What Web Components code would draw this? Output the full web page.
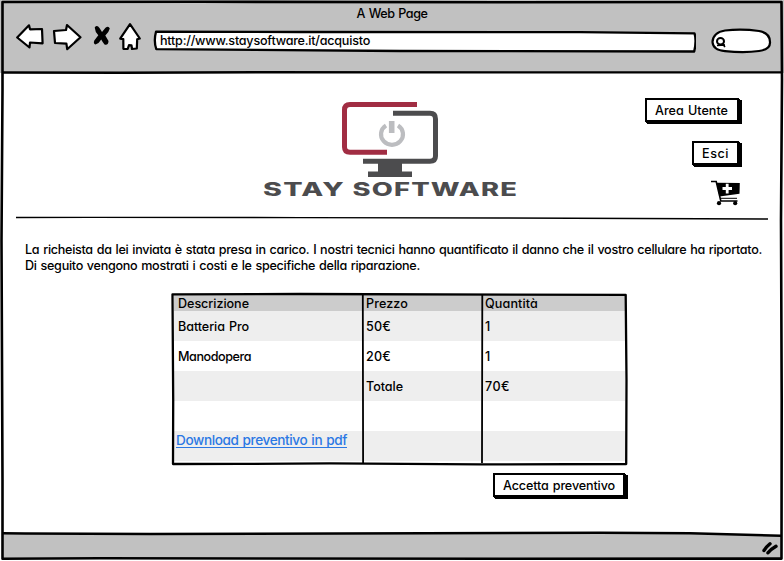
<!DOCTYPE html>
<html lang="it">
<head>
<meta charset="utf-8">
<title>A Web Page</title>
<style>
body{margin:0;background:#fff;font:450 12.6px/16px Inter,"Noto Sans",sans-serif;color:#000}
</style>
</head>
<body>
<sk-window>
  <sk-toolbar slot="top" heading="A Web Page" url="http://www.staysoftware.it/acquisto"></sk-toolbar>
  <sk-banner></sk-banner>
  <sk-intro></sk-intro>
  <sk-table></sk-table>
  <sk-actions></sk-actions>
</sk-window>
<script>
const define = (name, html, init) => customElements.define(name, class extends HTMLElement {
  connectedCallback() {
    if (this.shadowRoot) return;
    const t = document.createElement('template');
    t.innerHTML = html.replace(/\{(\w+)\}/g, (m, k) => this.getAttribute(k) ?? m);
    this.attachShadow({mode: 'open'}).append(t.content.cloneNode(true));
    if (init) init(this, this.shadowRoot);
  }
});

// A single line of lettering, tracked so that it fills its "w" in pixels.
define('sk-text', `<style>
:host{display:block;white-space:nowrap;font-feature-settings:"cv11","ss03";word-spacing:.8px}
span{display:inline-block;white-space:pre}
</style><span></span>`, (el, root) => {
  const s = root.querySelector('span'), txt = el.getAttribute('t');
  s.textContent = txt;
  el.style.width = el.getAttribute('w') + 'px';
  const natural = s.getBoundingClientRect().width;
  s.style.letterSpacing = ((el.getAttribute('w') - natural) / txt.length).toFixed(3) + 'px';
});

define('sk-window', `<style>
:host{display:grid;grid-template-rows:73px 1fr 27px;position:relative;width:784px;height:561px;box-sizing:border-box;overflow:hidden}
main{display:flex;flex-direction:column}
footer{background:#c1c1c1;margin:0 3px 2px 3px}
.frame{position:absolute;inset:0;pointer-events:none}
</style>
<slot name="top"></slot>
<main><slot></slot></main>
<footer></footer>
<svg class="frame" width="784" height="561" fill="none" stroke="#000" stroke-linejoin="round">
<path d="M700 531 V533.2 L781 535.2 V531Z" fill="#fff" stroke="none"/>
<path d="M2.5 2 L200 1.8 L500 2.2 L781.5 2 L782 80 L781 220 L781.7 400 L781.5 558.6 L500 558.8 L100 558.2 L2.5 558.8 L2.5 480 L1.5 240 L2.5 90Z" stroke-width="2.6"/>
<path d="M3 72.5 L120 72.7 L260 72.3 L781 72.4" stroke-width="2.4"/>
<path d="M3 533.3 L25 533.5 L150 534 L600 532.8 L690 533.2 L781 535.7" stroke-width="2.4"/>
<path d="M764 550.5 Q765.5 547.5 770 543.8 M768 552.8 Q770.5 549.5 776 546.3" stroke-width="3.4" stroke-linecap="round"/>
</svg>`);

define('sk-toolbar', `<style>
:host{display:grid;grid-template-rows:22px 1fr;background:#c1c1c1;padding:6px 2px 0}
.t{display:flex;justify-content:center}
nav{display:flex;align-items:flex-start;padding-left:14px}
.url{position:relative;isolation:isolate;margin-left:10px;width:544px;height:27px}
.url sk-text{padding:5px 0 0 8px}
.url svg{position:absolute;inset:0;z-index:-1}
.search{margin-left:14px}
</style>
<div class="t"><sk-text w="71" t="{heading}"></sk-text></div>
<nav>
<svg width="126" height="32" viewBox="16 20 126 32" fill="#fff" stroke="#000" stroke-width="2.2" stroke-linejoin="round" style="margin-top:-8px">
<path d="M17.2 37.5 L29 25.3 L30 29.3 L42 29 L42.6 43.3 L30 42.5 L29.5 47.5Z"/>
<path d="M54 31 L66 30 L67 25 L80.5 37.3 L67.2 49.2 L66.4 43.7 L55 43Z"/>
<path d="M94.7 27.5 Q97 24.5 99.5 28 L102 32 L105.5 27.8 Q108.5 25.5 109.8 28.5 Q109 32 105.3 35.5 L108.5 41 Q108.5 45.5 104.5 44.5 Q102.5 42 101.2 39.5 Q99 43.5 95.5 44.5 Q93 43.5 94.3 40.5 L98.3 35.3 Q95 32 94.7 27.5Z" fill="#000" stroke="none"/>
<path d="M130 24.2 L139.8 38.5 L137.2 39.3 L136.8 48.5 L132 49 L131.5 45.4 L129 45.2 L127.7 49 L123.4 48.8 L123.3 39.2 L120.2 38.7Z"/>
</svg>
<div class="url"><svg width="544" height="27" viewBox="152 28 544 27" fill="#fff" stroke="#000" stroke-width="2.3" stroke-linejoin="round"><path d="M156 31.7 Q153.5 41 156.3 49.2 L400 51 L694.2 51.5 Q696.7 41 694.5 33.3 L580 32.2 L300 32Z"/></svg><sk-text w="210" t="{url}"></sk-text></div>
<svg class="search" width="64" height="28" viewBox="710 28 64 28" fill="#fff" stroke="#000" stroke-width="2.2"><path d="M725 30.5 Q742 28.7 759 31 Q770 33 770 42 Q770.5 49.5 759 51 Q745 53 725 51.2 Q713 50 712.5 42 Q713 32.5 725 30.5Z"/><ellipse cx="720.5" cy="41.3" rx="3.5" ry="3.2" stroke-width="2"/><path d="M723.3 44 L724.8 47.2 M717 45.5 L725 45" stroke-width="1.7"/></svg>
</nav>`);

// Push button with a hard offset shadow.
define('sk-button', `<style>
:host{display:block;box-sizing:border-box;height:24px;border:2px solid #000;background:#fff;padding:3px 0 0 8px;box-shadow:1px 1px 0 #000,2px 2px 0 #000,3px 2px 0 #000}
</style><slot></slot>`);

define('sk-banner', `<style>
:host{display:grid;grid-template-columns:260px 260px 1fr;height:148px;position:relative}
.logo{grid-column:2;margin-top:23px}
.side{display:flex;flex-direction:column;align-items:flex-end;padding:25px 45px 0 0;row-gap:19px}
.side svg{margin:-6px -2px 0 0}
.rule{position:absolute;left:0;top:140px}
text{font-family:Inter,sans-serif}
</style>
<svg class="logo" width="260" height="110" viewBox="260 96 260 110" fill="none" stroke-width="5">
<path d="M417 104.5 H350 Q344.5 104.5 344.5 110 V147 Q344.5 152.3 350 152.3 H387" stroke="#a12d43"/>
<path d="M393 113.3 H430 Q435.5 113.3 435.5 119 V156 Q435.5 161.3 430 161.3 H363" stroke="#4c4c4e"/>
<path d="M378 162 H402 V171.5 H412 V177 H368 V171.5 H378Z" fill="#4c4c4e"/>
<path d="M386 125.5 A11 10.5 0 1 0 398 125.5" stroke="#bcbdc0" stroke-width="4.2"/>
<path d="M391.7 121 V133" stroke="#bcbdc0" stroke-width="5.6"/>
<g fill="#4c4c4e" font-size="18.3" font-weight="800" letter-spacing=".8">
<text x="263" y="195.5" textLength="82" lengthAdjust="spacingAndGlyphs">STAY</text>
<text x="352.5" y="195.5" textLength="165.5" lengthAdjust="spacingAndGlyphs">SOFTWARE</text></g>
</svg>
<div class="side">
<sk-button style="width:94px"><sk-text t="Area Utente" w="73"></sk-text></sk-button>
<sk-button style="width:47px"><sk-text t="Esci" w="27"></sk-text></sk-button>
<svg width="32" height="29" viewBox="709 179 32 29"><path d="M711 182.5 H716.2 L720.8 202 H737.5" fill="none" stroke="#000" stroke-width="1.6"/><path d="M716.5 183.7 L739.8 184 L739.5 194.8 L719.5 197.5Z"/><path d="M720 199.3 H737" stroke="#000" stroke-width="1"/><circle cx="719" cy="204.2" r="2.1"/><circle cx="735.2" cy="204.2" r="2.1"/><path d="M727.2 184.8 V194.4 M722.5 189.5 H732" stroke="#fff" stroke-width="2.8"/></svg>
</div>
<svg class="rule" width="784" height="10" viewBox="0 213 784 10"><path d="M16 217.5 L90 217.4 L300 217.6 L500 218 L768 219" fill="none" stroke="#000" stroke-width="1.4"/></svg>`);

define('sk-intro', `<style>:host{display:block;padding:21px 0 0 25px;height:51px}</style>
<sk-text w="737" t="La richeista da lei inviata è stata presa in carico. I nostri tecnici hanno quantificato il danno che il vostro cellulare ha riportato."></sk-text>
<sk-text w="395" t="Di seguito vengono mostrati i costi e le specifiche della riparazione."></sk-text>`);

define('sk-table', `<style>
:host{display:block;position:relative;width:456px;height:172px;margin-left:172px}
.r{display:grid;grid-template-columns:192px 119px 1fr;height:30px;margin:0 3px 0 2px;align-items:start}
.r>*{margin:8px 0 0 4px}
.r>:nth-child(2){margin-left:0}
.r>:nth-child(3){margin-left:0}
.r:nth-of-type(even){background:#eee}
.r.h{height:16px;background:#ccc}
.r.h>*{margin-top:1px}
section{padding-top:2px}
a{display:block;justify-self:start;color:#2b78e4;font-size:13.6px;text-decoration:none;border-bottom:1px solid #2b78e4;height:16px;line-height:18px}
.r a{margin:0 0 0 2px}
.lines{position:absolute;left:0;top:0}
</style>
<section></section>
<svg class="lines" width="458" height="174" viewBox="172 293 458 174" fill="none" stroke="#000" stroke-linejoin="round" overflow="visible"><path d="M172.5 294.3 L300 294 L625.7 294.9 L626.5 380 L626.2 464 L480 464.4 L330 463.3 L240 463.9 L173 464 L173.2 400Z" stroke-width="2.3"/><path d="M362.8 295 L363.1 463 M482.3 295 L482 463" stroke-width="1.8"/></svg>`, (el, root) => {
  const rows = [
    [['Descrizione', 71], ['Prezzo', 42], ['Quantità', 53]],
    [['Batteria Pro', 71], ['50€', 25], ['1', 6]],
    [['Manodopera', 73], ['20€', 25], ['1', 6]],
    [null, ['Totale', 37], ['70€', 25]],
    [null, null, null],
    ['link', null, null]
  ];
  root.querySelector('section').innerHTML = rows.map((r, i) =>
    `<div class="r${i ? '' : ' h'}">` + r.map(c =>
      c === 'link' ? '<a><sk-text w="171" t="Download preventivo in pdf"></sk-text></a>'
      : c ? `<sk-text t="${c[0]}" w="${c[1]}"></sk-text>` : '<span></span>').join('') + '</div>').join('');
});

define('sk-actions', `<style>:host{display:flex;justify-content:flex-end;padding:8px 159px 0 0}</style>
<sk-button style="width:132px"><sk-text t="Accetta preventivo" w="112"></sk-text></sk-button>`);
</script>
</body>
</html>
